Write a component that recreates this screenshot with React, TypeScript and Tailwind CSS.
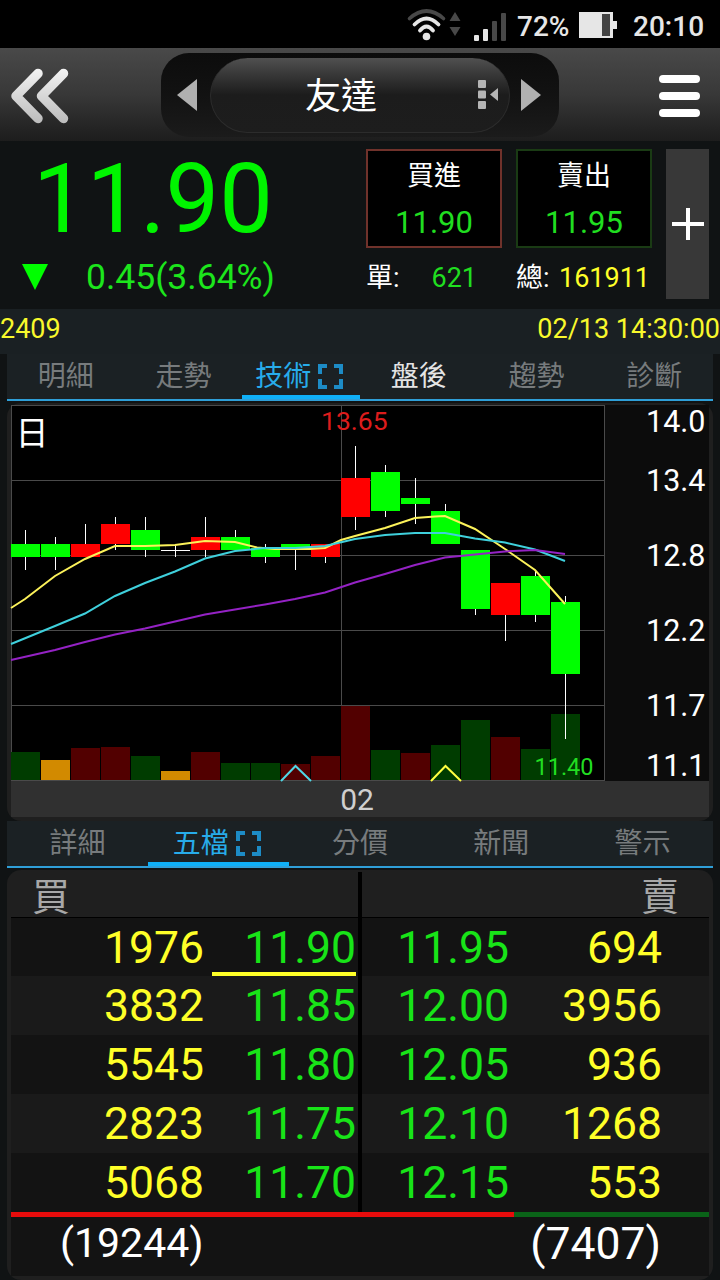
import { useState } from 'react';
import clsx from 'clsx';

type Candle = {
  open: 'up' | 'down' | 'flat';
  high: number;
  top: number;
  bottom: number;
  low: number;
  volume: number;
  volumeColor: string;
};

const RED = '#520000';
const GREEN = '#003c00';
const ORANGE = '#d28a00';

const candles: Candle[] = [
  { open: 'down', high: 530, top: 544, bottom: 557, low: 570, volume: 752, volumeColor: GREEN },
  { open: 'down', high: 537, top: 544, bottom: 557, low: 570, volume: 760, volumeColor: ORANGE },
  { open: 'up', high: 524, top: 544, bottom: 557, low: 557, volume: 748, volumeColor: RED },
  { open: 'up', high: 517, top: 524, bottom: 544, low: 550, volume: 747, volumeColor: RED },
  { open: 'down', high: 517, top: 530, bottom: 550, low: 557, volume: 756, volumeColor: GREEN },
  { open: 'flat', high: 545, top: 550, bottom: 551, low: 557, volume: 771, volumeColor: ORANGE },
  { open: 'up', high: 517, top: 537, bottom: 550, low: 557, volume: 752, volumeColor: RED },
  { open: 'down', high: 530, top: 537, bottom: 550, low: 550, volume: 763, volumeColor: GREEN },
  { open: 'down', high: 544, top: 548, bottom: 557, low: 563, volume: 763, volumeColor: GREEN },
  { open: 'down', high: 544, top: 544, bottom: 550, low: 570, volume: 764, volumeColor: RED },
  { open: 'up', high: 544, top: 544, bottom: 557, low: 563, volume: 756, volumeColor: RED },
  { open: 'up', high: 446, top: 478, bottom: 517, low: 530, volume: 706, volumeColor: RED },
  { open: 'down', high: 465, top: 472, bottom: 511, low: 517, volume: 750, volumeColor: GREEN },
  { open: 'down', high: 478, top: 498, bottom: 504, low: 524, volume: 753, volumeColor: RED },
  { open: 'down', high: 504, top: 511, bottom: 544, low: 544, volume: 745, volumeColor: GREEN },
  { open: 'down', high: 550, top: 550, bottom: 609, low: 615, volume: 720, volumeColor: GREEN },
  { open: 'up', high: 583, top: 583, bottom: 615, low: 641, volume: 737, volumeColor: RED },
  { open: 'down', high: 571, top: 576, bottom: 615, low: 622, volume: 749, volumeColor: GREEN },
  { open: 'down', high: 596, top: 602, bottom: 674, low: 739, volume: 714, volumeColor: GREEN },
];

const ma5 = '11,608 25,599 55,576 85,559 115,546 145,546 175,545 205,541 235,542 257,547.5 275,549 310,549 325,548 341,540 355,536 385,528 415,518 435,516.5 445,516 475,529 505,549 535,570 565,604';
const ma10 = '11,644 55,626 85,613.5 115,596 145,583 175,571.5 205,558.5 235,551 265,548 295,548 325,546 355,539 385,535 415,533 445,533 475,538.5 505,542.5 535,549.5 565,561';
const ma20 = '11,660 55,650 85,642 115,634.5 145,628.5 175,621.5 205,614.5 235,609.5 265,604.5 295,599 325,592.5 355,582.5 385,574 415,565 445,557.5 475,554.5 505,551.5 535,550 565,554';

const axis = [
  { label: '14.0', y: 432 },
  { label: '13.4', y: 491 },
  { label: '12.8', y: 566 },
  { label: '12.2', y: 641 },
  { label: '11.7', y: 716 },
  { label: '11.1', y: 776 },
];

const orders = [
  { bidQty: 1976, bid: '11.90', ask: '11.95', askQty: 694 },
  { bidQty: 3832, bid: '11.85', ask: '12.00', askQty: 3956 },
  { bidQty: 5545, bid: '11.80', ask: '12.05', askQty: 936 },
  { bidQty: 2823, bid: '11.75', ask: '12.10', askQty: 1268 },
  { bidQty: 5068, bid: '11.70', ask: '12.15', askQty: 553 },
];

function StatusBar() {
  return (
    <div className="flex h-12 items-center bg-black pl-[406px] text-[28px] font-medium text-[#e6e6e6]">
      <svg className="h-12 w-[102px]" viewBox="406 0 102 48" fill="none" strokeLinecap="round">
        <path d="M409.500 18.500Q426.500 3.500 443.500 18.500" stroke="#484848" strokeWidth="3.600" />
        <path d="M414.500 24.500Q426.500 12.500 438.500 24.500" stroke="#e6e6e6" strokeWidth="3.800" />
        <path d="M420 30.500Q426.500 22.500 433 30.500" stroke="#e6e6e6" strokeWidth="3.800" />
        <circle cx="426.500" cy="36.500" r="3.800" fill="#e6e6e6" />
        <path d="M455 12l5.500 9h-11zM455 36l5.500-9h-11z" fill="#484848" />
        <rect x="474" y="35" width="5" height="6" rx="1" fill="#e6e6e6" />
        <rect x="483" y="29" width="5" height="12" rx="1" fill="#e6e6e6" />
        <rect x="492" y="21" width="5" height="20" rx="1" fill="#484848" />
        <rect x="501" y="13" width="5" height="28" rx="1" fill="#484848" />
      </svg>
      <span className="ml-[9px] mt-1.5 w-[62px]">72%</span>
      <svg className="h-12 w-[38px]" viewBox="579 0 38 48">
        <path d="M579 12h34v9h4v8h-4v9h-34z" fill="#e6e6e6" />
        <rect x="602" y="14" width="8" height="22" fill="#444" />
      </svg>
      <span className="ml-4 mt-1.5">20:10</span>
    </div>
  );
}

function TitleBar() {
  return (
    <header className="flex h-[93px] items-start bg-linear-to-b from-[#494949] via-[#383838] to-[#1d1d1d]">
      <button type="button" className="h-[93px] w-[161px]">
        <svg className="h-[93px] w-20" viewBox="0 48 80 93" fill="none" strokeWidth="9.500" strokeLinecap="round" strokeLinejoin="round">
          <defs>
            <linearGradient id="metal" gradientUnits="userSpaceOnUse" x1="0" y1="70" x2="0" y2="122">
              <stop offset="0" stopColor="#f2f2f2" />
              <stop offset="1" stopColor="#bdbdbd" />
            </linearGradient>
          </defs>
          <path d="M38 73.500L16 96L38 118.500M63.500 73.500L41.500 96L63.500 118.500" stroke="url(#metal)" />
        </svg>
      </button>
      <div className="mt-[5px] flex h-[84px] w-[398px] items-center rounded-[28px] bg-linear-to-b from-[#0c0c0c] via-[#121212] to-[#1b1b1b] pl-4">
        <svg className="h-8 w-5" viewBox="0 0 20 32"><path d="M0 16L20 0v32z" fill="#b0b0b0" /></svg>
        <div className="ml-[13px] flex h-[75px] w-[300px] items-center rounded-full border border-t-0 border-[#2c2c2c] bg-linear-to-b from-[#505050] via-[#1c1c1c] via-50% to-[#1d1d1d] pl-[94px]">
          <span className="mt-[5px] w-[173px] text-[36px] leading-none text-white">友達</span>
          <svg className="h-8 w-[21px]" viewBox="0 0 21 32" fill="#b4b4b4">
            <rect x="0" y="1" width="8" height="8" rx="1" />
            <rect x="0" y="11.500" width="8" height="8" rx="1" />
            <rect x="0" y="22" width="8" height="8" rx="1" />
            <path d="M12 15.500l8-6.500v13z" />
          </svg>
        </div>
        <svg className="ml-[11px] h-8 w-5" viewBox="0 0 20 32"><path d="M20 16L0 0v32z" fill="#b0b0b0" /></svg>
      </div>
      <button type="button" className="ml-[100px] mt-[27px] flex w-[41px] flex-col gap-[9px]">
        <span className="h-2 rounded-full bg-white" />
        <span className="h-2 rounded-full bg-white" />
        <span className="h-2 rounded-full bg-white" />
      </button>
    </header>
  );
}

function Quote() {
  return (
    <section className="flex h-[168px] bg-[#101314] pt-2">
      <div className="w-[366px] text-[#00f400]">
        <div className="pl-[33px] text-[95.500px] leading-[100px]">11.90</div>
        <div className="flex h-[58px] items-center pl-[22px]">
          <svg className="-mt-0.5 h-[26px] w-[26px]" viewBox="0 0 26 26"><path d="M0 0h26L13 26z" fill="#00ff00" /></svg>
          <span className="ml-[38px] text-[35.500px] leading-none text-[#1ce61c]">0.45(3.64%)</span>
        </div>
      </div>
      <div className="w-[150px]">
        <div className="flex h-[99px] w-[136px] flex-col items-center border-2 border-[#70322b] bg-black">
          <span className="text-[27px] leading-[50px] text-white">買進</span>
          <span className="text-[31px] leading-[43px] text-[#20de20]">11.90</span>
        </div>
        <div className="flex h-[60px] w-[111px] items-center justify-between text-[27px]">
          <span className="text-white">單:</span>
          <span className="text-[#20de20]">621</span>
        </div>
      </div>
      <div className="w-[150px]">
        <div className="flex h-[99px] w-[136px] flex-col items-center border-2 border-[#1a3b14] bg-black">
          <span className="text-[27px] leading-[50px] text-white">賣出</span>
          <span className="text-[31px] leading-[43px] text-[#20de20]">11.95</span>
        </div>
        <div className="flex h-[60px] w-[134px] items-center justify-between text-[27px]">
          <span className="text-white">總:</span>
          <span className="text-[#ffff28]">161911</span>
        </div>
      </div>
      <button type="button" className="flex h-[150px] w-[43px] items-center justify-center bg-[#383838]">
        <svg className="h-8 w-8" viewBox="0 0 32 32"><path d="M16 0v32M0 16h32" stroke="#fff" strokeWidth="4" /></svg>
      </button>
    </section>
  );
}

function Tabs({ items, active, lit, onChange }: { items: string[]; active: number; lit?: number; onChange: (i: number) => void }) {
  return (
    <nav className="flex h-[47px] border-b-2 border-[#2f9fd8] bg-[#1b2124]">
      {items.map((label, i) => (
        <button
          key={label}
          type="button"
          onClick={() => onChange(i)}
          className={clsx(
            'flex flex-1 items-center justify-center gap-[7px] border-b-4 pt-1 text-[28px] leading-none',
            i === active ? 'border-[#0fb0f8] text-[#27acea]' : 'border-transparent',
            i !== active && (i === lit ? 'text-[#e4e4e4]' : 'text-[#777b7d]'),
          )}
        >
          {label}
          {i === active && (
            <svg className="mr-1 h-[25px] w-[25px]" viewBox="0 0 25 25" fill="none" stroke="#1d8cc6" strokeWidth="4">
              <path d="M2 10V2h7M16 2h7v8M23 15v8h-7M9 23H2v-8" />
            </svg>
          )}
        </button>
      ))}
    </nav>
  );
}

function Chart() {
  return (
    <div className="mt-0.5 h-[418px] rounded-[14px] bg-[#1f1f1f] px-1 pt-0.5">
      <svg className="h-[376px] w-[698px] overflow-visible" viewBox="11 405 698 376" fontFamily='Roboto, "Noto Sans CJK TC", sans-serif'>
        <rect x="605" y="405" width="104" height="376" fill="#0c0c0c" />
        <rect x="11.5" y="405.500" width="593" height="375" fill="#000" stroke="#4a4a4a" />
        <path d="M11 480.500H605M11 555.500H605M11 630.500H605M11 705.500H605M341.500 405V781" stroke="#4a4a4a" />
        {candles.map((c, i) => (
          <rect key={i} x={11 + i * 30} y={c.volume} width="29" height={780 - c.volume} fill={c.volumeColor} />
        ))}
        {candles.map((c, i) => (
          <g key={i}>
            <rect x={25 + i * 30} y={c.high} width="1" height={c.low - c.high} fill="#fff" />
            <rect
              x={11 + i * 30}
              y={c.top}
              width="29"
              height={c.bottom - c.top}
              fill={c.open === 'up' ? '#ff0000' : c.open === 'down' ? '#00ff00' : '#fff'}
            />
          </g>
        ))}
        <g fill="none" strokeWidth="2">
          <polyline points={ma5} stroke="#fcf25a" />
          <polyline points={ma10} stroke="#3fd0dc" />
          <polyline points={ma20} stroke="#9422c4" />
          <path d="M281 781l14.500-15 15.500 15" stroke="#4fd6e6" />
          <path d="M431 781l14.500-15 15.500 15" stroke="#ffff40" />
        </g>
        <text x="15.500" y="445" fontSize="33" fill="#fff">日</text>
        <text x="321" y="430" fontSize="26.500" fill="#dc1c1c">13.65</text>
        <text x="534.500" y="775" fontSize="23.500" fill="#22dd22">11.40</text>
        {axis.map(a => (
          <text key={a.label} x="705.500" y={a.y} fontSize="30.500" fill="#fff" textAnchor="end">{a.label}</text>
        ))}
      </svg>
      <div className="h-9 bg-[#303030] pr-1.5 text-center text-[30px] leading-[37px] text-[#cfcfcf]">02</div>
    </div>
  );
}

function OrderBook() {
  return (
    <div className="mt-0.5 h-[410px] overflow-hidden rounded-[14px] bg-[#1f1f1f] px-1 pt-0.5">
      <div className="flex h-[45px] text-[38px] leading-[50px] text-[#a8a8a8]">
        <div className="w-[347px] pl-[21px]">買</div>
        <div className="w-1 bg-black" />
        <div className="w-[347px] pr-[30px] text-right">賣</div>
      </div>
      <div className="h-px bg-black" />
      {orders.map((o, i) => (
        <div
          key={o.bid}
          className={clsx('flex text-[44.500px]', i === 0 ? 'h-[58px] leading-[60px]' : 'h-[59px] leading-[61px]', i % 2 === 0 ? 'bg-[#131313]' : 'bg-[#1a1a1a]')}
        >
          <div className="w-[193px] text-right text-[#ffff28]">{o.bidQty}</div>
          <div className="flex w-[154px] justify-end pr-0.5">
            <div className={clsx('w-36 text-right text-[#18e418]', i === 0 && 'border-b-4 border-[#ffff28]')}>
              {o.bid}
            </div>
          </div>
          <div className="w-1 bg-black" />
          <div className="w-[147px] text-right text-[#18e418]">{o.ask}</div>
          <div className="w-[153px] text-right text-[#ffff28]">{o.askQty}</div>
        </div>
      ))}
      <div className="flex h-[5px] bg-[#0a6318]">
        <div className="w-[503px] bg-[#e80c0c]" />
      </div>
      <div className="flex h-[59px] items-start justify-between bg-[#131313] pr-12 pl-[49px] text-white">
        <span className="text-[41px] leading-[52px]">(19244)</span>
        <span className="text-[44.500px] leading-[54px]">(7407)</span>
      </div>
    </div>
  );
}

export default function App() {
  const [chartTab, setChartTab] = useState(2);
  const [detailTab, setDetailTab] = useState(1);

  return (
    <div className="h-[1280px] w-[720px] overflow-hidden bg-[#101314] font-[Roboto,'Noto_Sans_CJK_TC',sans-serif]">
      <StatusBar />
      <TitleBar />
      <Quote />
      <div className="flex h-[45px] justify-between bg-[#1a2023] text-[27px] leading-[41px] text-[#f8f82c]">
        <span>2409</span>
        <span>02/13 14:30:00</span>
      </div>
      <main className="mx-[7px]">
        <Tabs items={['明細', '走勢', '技術', '盤後', '趨勢', '診斷']} active={chartTab} lit={3} onChange={setChartTab} />
        <Chart />
        <Tabs items={['詳細', '五檔', '分價', '新聞', '警示']} active={detailTab} onChange={setDetailTab} />
        <OrderBook />
      </main>
    </div>
  );
}
